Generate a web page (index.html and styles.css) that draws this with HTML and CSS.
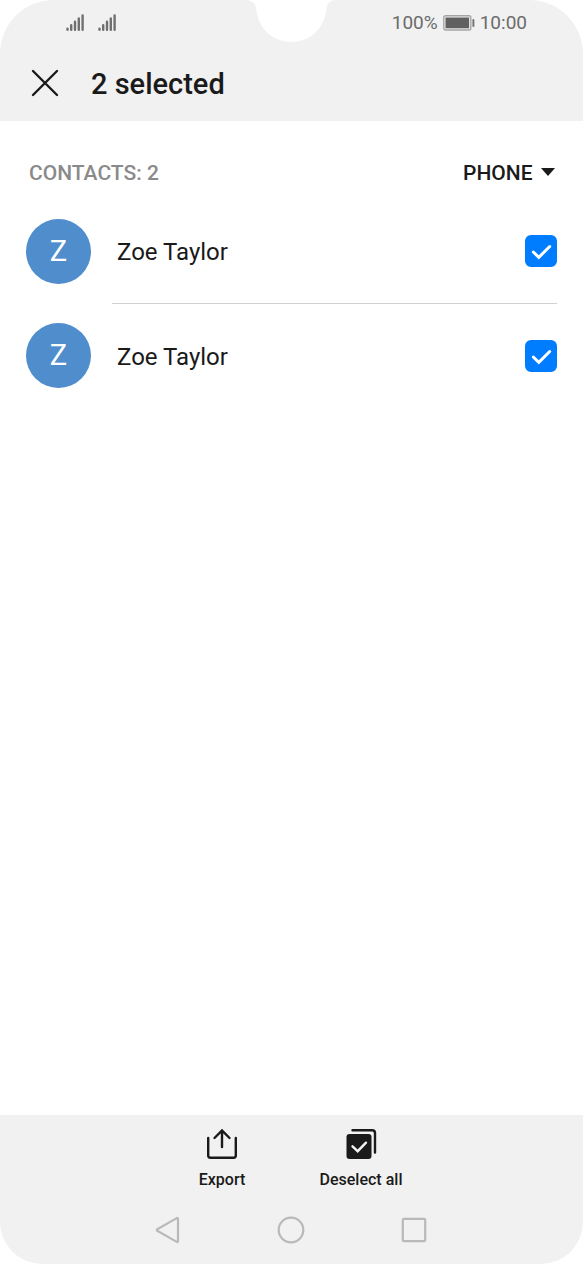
FILE: index.html
```html
<!DOCTYPE html>
<html lang="en">
<head>
<meta charset="utf-8">
<meta name="viewport" content="width=device-width, initial-scale=1">
<title>Export contacts</title>
<link rel="stylesheet" href="styles.css">
</head>
<body>
<div class="screen">
  <header class="top">
    <div class="status">
      <div class="signals">
        <svg class="signal" viewBox="0 0 19 17" aria-hidden="true"><path d="M1.5 14.6v1.2M5.2 11.2v4.6M9 7.8v8M12.8 4.4v11.4M16.6 1.4v14.4"/></svg>
        <svg class="signal" viewBox="0 0 19 17" aria-hidden="true"><path d="M1.5 14.6v1.2M5.2 11.2v4.6M9 7.8v8M12.8 4.4v11.4M16.6 1.4v14.4"/></svg>
      </div>
      <div class="power">
        <span>100%</span>
        <svg class="battery" viewBox="0 0 32 16" aria-hidden="true"><rect class="case" x=".8" y=".8" width="27" height="14.2" rx="1.8"/><rect class="charge" x="2.5" y="2.5" width="23.6" height="10.8"/><path class="tip" d="M30.4 5v6"/></svg>
        <span>10:00</span>
      </div>
    </div>
    <svg class="notch" viewBox="0 0 90 42" aria-hidden="true"><path d="M0 0C6 0 9.500 4 10 8C12 29 27 41.800 45.500 41.800S78.500 29 80.500 8C81 4 84 0 90 0Z"/></svg>
    <div class="titlebar">
      <button class="close" aria-label="Close"><svg viewBox="0 0 28 28" aria-hidden="true"><path d="M2 2l24 24M26 2L2 26"/></svg></button>
      <h1 class="title">2 selected</h1>
    </div>
  </header>
  <main class="content">
    <div class="section">
      <h2 class="heading">CONTACTS: 2</h2>
      <div class="source">
        <select class="select" aria-label="Account"><option>PHONE</option></select>
        <svg class="arrow" viewBox="0 0 14 8" aria-hidden="true"><path d="M0 0h14L7 8z"/></svg>
      </div>
    </div>
    <ul class="list">
      <li class="row">
        <span class="avatar" aria-hidden="true">Z</span>
        <div class="entry">
          <label class="name" for="contact-1">Zoe Taylor</label>
          <span class="tick"><input class="box" id="contact-1" type="checkbox" checked><svg class="mark" viewBox="0 0 32 32" aria-hidden="true"><path d="M8.300 17l5.500 5.300L24.700 11.500"/></svg></span>
        </div>
      </li>
      <li class="row">
        <span class="avatar" aria-hidden="true">Z</span>
        <div class="entry">
          <label class="name" for="contact-2">Zoe Taylor</label>
          <span class="tick"><input class="box" id="contact-2" type="checkbox" checked><svg class="mark" viewBox="0 0 32 32" aria-hidden="true"><path d="M8.300 17l5.500 5.300L24.700 11.500"/></svg></span>
        </div>
      </li>
    </ul>
  </main>
  <footer class="bottom">
    <div class="actions">
      <button class="action"><svg viewBox="0 0 32 32" aria-hidden="true"><path class="line" d="M2.200 10v17.500a2.200 2.200 0 0 0 2.200 2.200h23.200a2.200 2.200 0 0 0 2.200-2.200V10M16 19V2.500M8.500 10L16 2.500 23.500 10"/></svg><span>Export</span></button>
      <button class="action"><svg viewBox="0 0 32 32" aria-hidden="true"><rect class="solid" x="1.500" y="6" width="25" height="25" rx="3"/><path class="line" d="M7.500 2.200h19.700a2.800 2.800 0 0 1 2.800 2.800V24.500"/><path class="check" d="M7.500 18.300l5.200 4.900 8.300-8.500"/></svg><span>Deselect all</span></button>
    </div>
    <nav class="nav">
      <button class="key" aria-label="Back"><svg viewBox="0 0 28 28" aria-hidden="true"><path d="M24 2.800v22.400a.8.800 0 0 1-1.200.7L3.200 14.700a.8.800 0 0 1 0-1.400L22.800 2.100a.8.800 0 0 1 1.200.7z"/></svg></button>
      <button class="key" aria-label="Home"><svg viewBox="0 0 28 28" aria-hidden="true"><circle cx="14" cy="14" r="12.300"/></svg></button>
      <button class="key" aria-label="Recent apps"><svg viewBox="0 0 28 28" aria-hidden="true"><rect x="2.800" y="2.800" width="22.400" height="22.400" rx="1"/></svg></button>
    </nav>
  </footer>
</div>
</body>
</html>
```
FILE: styles.css
```css
* { box-sizing: border-box; }

body {
  margin: 0;
  background: #fff;
  color: #1a1a1a;
  font-family: Roboto, "Liberation Sans", sans-serif;
}

button, select {
  border: 0;
  padding: 0;
  background: none;
  color: inherit;
  font: inherit;
  appearance: none;
}

svg { display: block; fill: none; }

.screen {
  display: flex;
  flex-direction: column;
  min-height: 100vh;
}

.top {
  position: relative;
  background: #f1f1f1;
  border-radius: 54px 54px 0 0;
}

.notch {
  position: absolute;
  top: 0;
  left: 50%;
  width: 90px;
  height: 42px;
  margin-left: -46px;
  fill: #fff;
}

.status {
  display: flex;
  align-items: center;
  justify-content: space-between;
  height: 45px;
  padding: 0 56px 0 66px;
  color: #6b6b6b;
  font-size: 19px;
}

.signals { display: flex; gap: 13px; }

.signal {
  width: 19px;
  height: 17px;
  stroke: #707070;
  stroke-width: 2.4;
  stroke-linecap: round;
}

.power { display: flex; align-items: center; gap: 5px; }
.battery { width: 32px; height: 16px; }
.case { stroke: #a5a5a5; stroke-width: 1.4; }
.charge { fill: #606060; }
.tip { stroke: #777; stroke-width: 2; stroke-linecap: round; }

.titlebar {
  display: flex;
  align-items: center;
  gap: 32px;
  height: 76px;
  padding: 0 31px;
}

.close svg {
  width: 28px;
  height: 28px;
  stroke: #1a1a1a;
  stroke-width: 2.4;
  stroke-linecap: round;
}

.title {
  margin: 0;
  padding-top: 2px;
  font-size: 29px;
  font-weight: 500;
}

.content {
  flex: 1;
  padding: 24px 26px;
}

.section {
  display: flex;
  align-items: center;
  justify-content: space-between;
  height: 54px;
  padding: 2px 2px 0 3px;
  font-size: 21px;
  font-weight: 500;
}

.heading {
  margin: 0;
  color: #8a8a8a;
  font-size: 21px;
  font-weight: 500;
}

.source { position: relative; }
.select { padding-right: 22px; }

.arrow {
  position: absolute;
  top: 7px;
  right: 0;
  width: 14px;
  height: 8px;
  fill: #1a1a1a;
  pointer-events: none;
}

.list {
  margin: 0;
  padding: 0;
  list-style: none;
}

.row {
  display: flex;
  align-items: center;
  gap: 21px;
}

.avatar {
  display: grid;
  place-items: center;
  width: 65px;
  height: 65px;
  border-radius: 50%;
  background: #508dcd;
  color: #fff;
  font-size: 29px;
}

.entry {
  display: flex;
  flex: 1;
  align-items: center;
  justify-content: space-between;
  height: 104px;
  padding-left: 5px;
}

.row + .row .entry { border-top: 1px solid #d1d1d1; }

.name {
  padding-top: 2px;
  font-size: 24px;
}

.tick { display: grid; }
.box, .mark { grid-area: 1 / 1; width: 32px; height: 32px; }

.box {
  margin: 0;
  border: 2px solid #a5a5a5;
  border-radius: 6px;
  appearance: none;
}

.box:checked { border-color: #007dff; background: #007dff; }

.mark {
  stroke: #fff;
  stroke-width: 3;
  stroke-linecap: round;
  pointer-events: none;
}

.bottom {
  background: #f1f1f1;
  border-radius: 0 0 42px 42px;
}

.actions {
  display: flex;
  justify-content: center;
  padding-top: 13px;
}

.action {
  display: flex;
  flex-direction: column;
  align-items: center;
  gap: 10px;
  width: 139px;
  height: 68px;
  font-size: 16px;
  font-weight: 500;
}

.action svg { width: 32px; height: 32px; }

.line {
  stroke: #1a1a1a;
  stroke-width: 2.4;
  stroke-linecap: round;
}

.solid { fill: #1a1a1a; }

.check {
  stroke: #f1f1f1;
  stroke-width: 2.4;
  stroke-linecap: round;
}

.nav {
  display: flex;
  justify-content: center;
  gap: 95px;
  height: 68px;
  padding-right: 1px;
}

.key svg {
  width: 28px;
  height: 28px;
  stroke: #b9b9b9;
  stroke-width: 2.2;
}
```
